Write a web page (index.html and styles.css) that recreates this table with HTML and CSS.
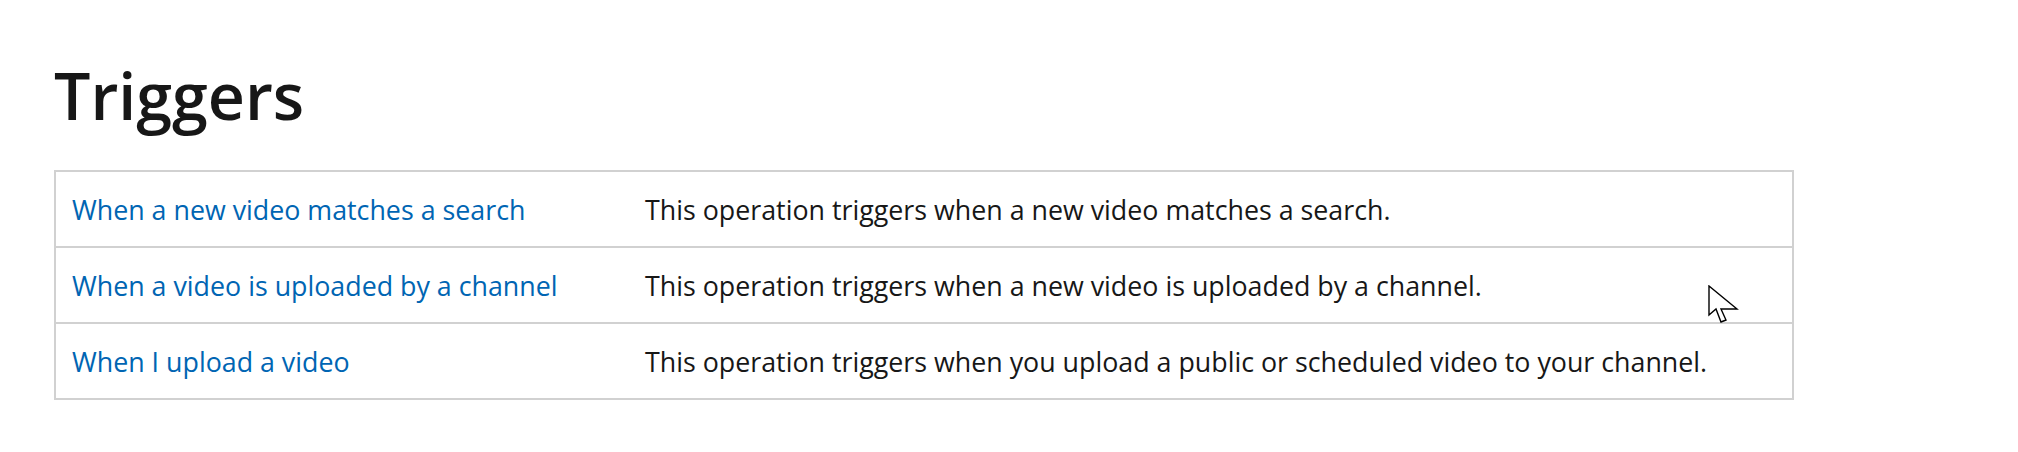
FILE: index.html
```html
<!DOCTYPE html>
<html lang="en">
<head>
<meta charset="utf-8">
<title>Triggers</title>
<link rel="stylesheet" href="styles.css">
</head>
<body>
<main class="page">
  <h2 class="title">Triggers</h2>
  <table class="triggers">
    <tbody>
      <tr>
        <td class="name"><a href="#">When a new video matches a search</a></td>
        <td class="desc">This operation triggers when a new video matches a search.</td>
      </tr>
      <tr>
        <td class="name"><a href="#">When a video is uploaded by a channel</a></td>
        <td class="desc">This operation triggers when a new video is uploaded by a channel.</td>
      </tr>
      <tr>
        <td class="name"><a href="#">When I upload a video</a></td>
        <td class="desc">This operation triggers when you upload a public or scheduled video to your channel.</td>
      </tr>
    </tbody>
  </table>
</main>
<svg class="cursor" width="32" height="40" viewBox="0 0 32 40" aria-hidden="true">
  <path d="M1,1 L1,30 L8,24 L13,37 L18,35 L13,24 L29,24 Z" fill="#fff" stroke="#000" stroke-width="1.4" stroke-linejoin="miter"/>
</svg>
</body>
</html>
```
FILE: styles.css
```css
html, body {
  margin: 0;
  padding: 0;
  background: #ffffff;
}

body {
  font-family: "Open Sans", "Noto Sans", sans-serif;
  color: #171717;
}

.page {
  padding: 57px 0 0 54px;
}

.title {
  margin: 0 0 36px 0;
  font-size: 64.5px;
  line-height: 77px;
  font-weight: 600;
  color: #171717;
}

.triggers {
  border-collapse: collapse;
  width: 1740px;
  border: 2px solid #d1d1d1;
  font-size: 26.8px;
  line-height: 40px;
}

.triggers tr {
  border-bottom: 2px solid #d1d1d1;
}

.triggers td {
  padding: 18px 16px 16px 16px;
  vertical-align: top;
  text-align: left;
}

.triggers .name {
  width: 541px;
}

.triggers a {
  color: #0065b3;
  text-decoration: none;
}

.cursor {
  position: absolute;
  left: 1708px;
  top: 285px;
}
```
